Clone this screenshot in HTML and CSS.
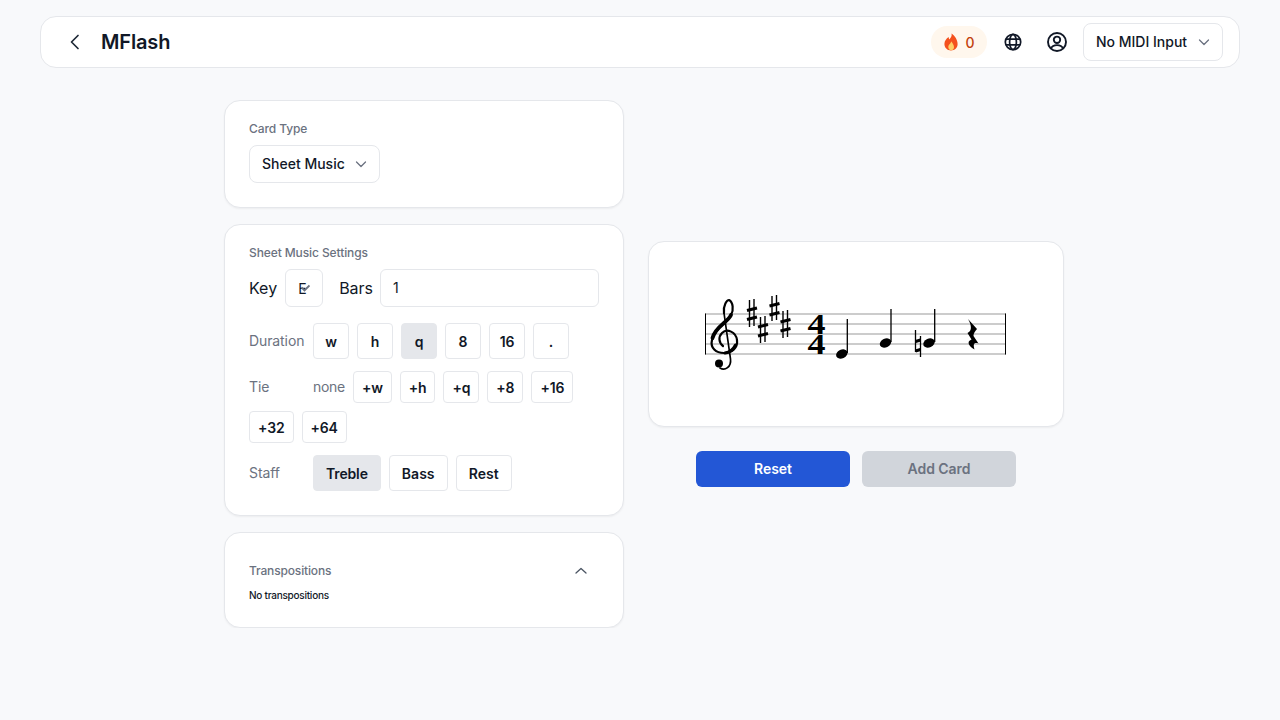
FILE: index.html
```html
<!DOCTYPE html>
<html lang="en">
<head>
  <meta charset="UTF-8" />
  <title>MFlash</title>
  <link rel="stylesheet" href="styles.css">
</head>
<body>

<!-- Top bar -->
<header class="topbar">
  <div class="topbar-left">
    <button class="icon-btn back-btn" aria-label="Back">
      <svg width="20" height="20" viewBox="0 0 20 20" fill="none" stroke="#1f2937" stroke-width="1.7" stroke-linecap="round" stroke-linejoin="round"><path d="M13 3.5 6.5 10l6.500 6.500"/></svg>
    </button>
    <h1 class="brand">MFlash</h1>
  </div>
  <div class="topbar-right">
    <div class="streak">
      <svg width="16" height="18" viewBox="0 0 16 18"><path fill="#f4511e" d="M8.600.6c.5 3-1 4.400-2.300 5.900-.4-.9-.6-1.500-.7-2.400C3.400 5.700 1.400 8 1.400 11c0 3.800 2.900 6.400 6.600 6.400s6.600-2.600 6.600-6.200C14.600 6.800 11.800 2.900 8.600.6z"/><path fill="#ffcf66" d="M8.200 8.300c.2 1.800-2.900 3.300-2.900 5.800 0 1.800 1.200 3.200 2.800 3.200s2.900-1.300 2.900-3.100c0-2.400-1.700-4.100-2.800-5.900z"/></svg>
      <span>0</span>
    </div>
    <button class="icon-btn globe-btn" aria-label="Language">
      <svg width="20" height="20" viewBox="0 0 20 20" fill="none" stroke="#111827" stroke-width="1.700"><circle cx="10" cy="10" r="7.700"/><ellipse cx="10" cy="10" rx="3.400" ry="7.700"/><path d="M2.900 7.200h14.200M2.900 12.800h14.200"/></svg>
    </button>
    <button class="icon-btn user-btn" aria-label="Account">
      <svg width="22" height="22" viewBox="0 0 22 22" fill="none" stroke="#111827" stroke-width="1.900"><circle cx="11" cy="11" r="9"/><circle cx="11" cy="8.800" r="3.200"/><path d="M5 17.500c1-2.500 3.200-3.400 6-3.400s5 .9 6 3.400"/></svg>
    </button>
    <div class="select midi-select">
      <span>No MIDI Input</span>
      <svg class="chev" width="14" height="14" viewBox="0 0 14 14" fill="none" stroke="#6b7280" stroke-width="1.300" stroke-linecap="round" stroke-linejoin="round"><path d="M2.500 5 7 9.500 11.500 5"/></svg>
    </div>
  </div>
</header>

<main class="layout">
  <section class="left-col">

    <div class="card">
      <div class="label">Card Type</div>
      <div class="select type-select">
        <span>Sheet Music</span>
        <svg class="chev" width="14" height="14" viewBox="0 0 14 14" fill="none" stroke="#6b7280" stroke-width="1.300" stroke-linecap="round" stroke-linejoin="round"><path d="M2.500 5 7 9.500 11.500 5"/></svg>
      </div>
    </div>

    <div class="card">
      <div class="label">Sheet Music Settings</div>
      <div class="key-row">
        <span class="field-name">Key</span>
        <div class="key-box">
          <span>E</span>
          <svg class="key-chev" width="9" height="9" viewBox="0 0 9 9" fill="none" stroke="#6b7280" stroke-width="1.900"><path d="M.5 3.500 3.500 6.500 8.500 1.500"/></svg>
        </div>
        <span class="field-name bars-name">Bars</span>
        <div class="bars-box">1</div>
      </div>

      <div class="btn-row">
        <span class="row-name">Duration</span>
        <button class="tool-btn square">w</button>
        <button class="tool-btn square">h</button>
        <button class="tool-btn square on">q</button>
        <button class="tool-btn square">8</button>
        <button class="tool-btn square">16</button>
        <button class="tool-btn square">.</button>
      </div>

      <div class="btn-row tie-row">
        <span class="row-name">Tie</span>
        <span class="tie-none">none</span>
        <button class="tool-btn tie">+w</button>
        <button class="tool-btn tie">+h</button>
        <button class="tool-btn tie">+q</button>
        <button class="tool-btn tie">+8</button>
        <button class="tool-btn tie">+16</button>
        <button class="tool-btn tie">+32</button>
        <button class="tool-btn tie">+64</button>
      </div>

      <div class="btn-row staff-row">
        <span class="row-name">Staff</span>
        <button class="tool-btn on">Treble</button>
        <button class="tool-btn">Bass</button>
        <button class="tool-btn">Rest</button>
      </div>
    </div>

    <div class="card">
      <div class="trans-head">
        <span class="label">Transpositions</span>
        <svg class="trans-chev" width="14" height="14" viewBox="0 0 14 14" fill="none" stroke="#4b5563" stroke-width="1.300" stroke-linecap="round" stroke-linejoin="round"><path d="M2 9 7 4.500 12 9"/></svg>
      </div>
      <div class="trans-empty">No transpositions</div>
    </div>

  </section>

  <section class="right-col">
    <div class="card preview">
      <!-- viewBox uses page coordinates, easier to line up -->
      <svg class="staff" width="340" height="110" viewBox="686 279 340 110">
        <g stroke="#999" stroke-width="1">
          <path d="M705 314H1006M705 324H1006M705 334H1006M705 344H1006M705 354H1006"/>
        </g>
        <path stroke="#000" stroke-width="1" d="M705.500 313.500V354.500M1005.500 313.500V354.500"/>

        <!-- clef -->
        <g fill="none" stroke="#000" stroke-linecap="round">
          <path stroke-width="2.200" d="M724 313C723 305 727 300 729 300C733 302 734 310 731 315C728 322 715 327 712 340C710 348 716 353 724 353C732 353 738 348 737 340C736 332 727 328 722 333C718 337 719 343 723 346"/>
          <path stroke-width="3.800" d="M731 315C728 322 715 327 712.500 338"/>
          <path stroke-width="3" d="M735.500 345C733 350 729 352.500 725 353"/>
          <path stroke-width="1.700" d="M724 313L730.500 359C731.500 367 725 371 720 368"/>
        </g>
        <circle cx="719" cy="363.500" r="4"/>

        <!-- key signature -->
        <g stroke="#000" fill="none">
          <g stroke-width="1.400"><path d="M749.500 300V327M754 299V326"/><path stroke-width="3" d="M747 310.500 757 308M747 319.500 757 317"/></g>
          <g stroke-width="1.400"><path d="M760.500 317V343M765 316V342"/><path stroke-width="3" d="M758 327 768 324.500M758 336 768 333.500"/></g>
          <g stroke-width="1.400"><path d="M772 296V321M776.500 295V320"/><path stroke-width="3" d="M769.500 306 779.500 303.500M769.500 315 779.500 312.500"/></g>
          <g stroke-width="1.400"><path d="M783 311V338M787.500 310V337"/><path stroke-width="3" d="M780.500 322 790.500 319.500M780.500 331 790.500 328.500"/></g>
        </g>

        <!-- time signature -->
        <text class="time-sig" transform="translate(816.500 333.500) scale(1.200 1)">4</text>
        <text class="time-sig" transform="translate(816.500 354) scale(1.200 1)">4</text>

        <!-- notes -->
        <g stroke="#000" stroke-width="1.300">
          <path d="M847.300 353V319M891 342V309M934.700 342V309"/>
        </g>
        <ellipse cx="841.800" cy="354" rx="6" ry="4.300" transform="rotate(-25 841.800 354)"/>
        <ellipse cx="885.500" cy="343" rx="6" ry="4.300" transform="rotate(-25 885.500 343)"/>
        <ellipse cx="929" cy="343" rx="6" ry="4.300" transform="rotate(-25 929 343)"/>

        <!-- natural -->
        <g stroke="#000" fill="none">
          <path stroke-width="1.300" d="M915.500 330V352M920.500 336V357"/>
          <path stroke-width="3" d="M915.500 341.500 920.500 340M915.500 351 920.500 349.500"/>
        </g>

        <!-- quarter rest -->
        <path d="M968 319 977 329C975 331.500 973.300 333.500 973.500 336L978.500 343.500C975 342.500 972.500 343 974.500 349.500C969 346.500 966 341.500 971.500 339.500L967.500 333C972 331 972 326 968 319z"/>
      </svg>
    </div>
    <div class="actions">
      <button class="action reset">Reset</button>
      <button class="action add">Add Card</button>
    </div>
  </section>
</main>

</body>
</html>
```

FILE: styles.css
```css
* {
    box-sizing: border-box;
}
body {
    margin: 0;
    background: #f8f9fb;
    color: #111827;
    font-family: Inter, "Liberation Sans", sans-serif;
}
button {
    font-family: inherit;
}

/* top bar */
.topbar {
    display: flex;
    justify-content: space-between;
    align-items: center;
    height: 52px;
    margin: 16px 40px 0;
    padding: 0 16px 0 24px;
    background: #fff;
    border: 1px solid #e5e7eb;
    border-radius: 16px;
}
.topbar-left,
.topbar-right {
    display: flex;
    align-items: center;
}
.icon-btn {
    display: flex;
    align-items: center;
    justify-content: center;
    padding: 0;
    background: none;
    border: none;
    cursor: pointer;
}
.back-btn {
    width: 20px;
    height: 20px;
}
.brand {
    margin: 0 0 0 16px;
    font-size: 20px;
    font-weight: 600;
    line-height: 28px;
    letter-spacing: -0.15px;
    color: #111827;
}
.streak {
    display: flex;
    align-items: center;
    justify-content: center;
    gap: 6px;
    width: 56px;
    height: 32px;
    background: #fff7ed;
    border-radius: 16px;
    font-size: 14px;
    font-weight: 500;
    color: #c2410c;
}
.globe-btn {
    width: 20px;
    height: 20px;
    margin-left: 16px;
}
.user-btn {
    width: 22px;
    height: 22px;
    margin-left: 23px;
}
.select {
    display: flex;
    align-items: center;
    justify-content: space-between;
    height: 38px;
    padding-bottom: 2px;
    background: #fff;
    border: 1px solid #e5e7eb;
    border-radius: 8px;
    font-size: 14px;
    font-weight: 500;
    color: #111827;
}
.select .chev {
    margin-top: 2px;
}
.midi-select {
    width: 140px;
    margin-left: 15px;
    padding-left: 12px;
    padding-right: 11px;
}
.type-select {
    width: 131px;
    padding-left: 12px;
    padding-right: 11px;
}

/* columns */
.layout {
    display: flex;
    align-items: center;
    gap: 24px;
    width: 840px;
    margin: 32px 0 0 224px;
}
.left-col {
    display: flex;
    flex-direction: column;
    gap: 16px;
    width: 400px;
}
.right-col {
    display: flex;
    flex-direction: column;
    align-items: center;
    gap: 24px;
    width: 416px;
}
.card {
    padding: 20px 24px 24px;
    background: #fff;
    border: 1px solid #e5e7eb;
    border-radius: 16px;
    box-shadow: 0 1px 2px rgba(0, 0, 0, 0.05);
}
.label {
    margin-bottom: 8px;
    font-size: 12px;
    font-weight: 500;
    line-height: 16px;
    letter-spacing: -0.1px;
    color: #6b7280;
}

/* key + bars */
.key-row {
    display: flex;
    align-items: center;
    height: 38px;
}
.field-name {
    font-size: 16px;
    color: #111827;
}
.key-box {
    position: relative;
    display: flex;
    align-items: center;
    width: 38px;
    height: 38px;
    margin-left: 8px;
    padding-left: 12px;
    background: #fff;
    border: 1px solid #e5e7eb;
    border-radius: 6px;
    font-size: 14px;
}
.key-chev {
    position: absolute;
    top: 14px;
    left: 15px;
}
.bars-name {
    margin-left: 16px;
}
.bars-box {
    flex: 1;
    display: flex;
    align-items: center;
    height: 38px;
    margin-left: 7px;
    padding-left: 12px;
    padding-bottom: 1px;
    border: 1px solid #e5e7eb;
    border-radius: 6px;
    font-size: 14px;
}

/* button rows */
.btn-row {
    display: flex;
    align-items: center;
    flex-wrap: wrap;
    gap: 8px;
    margin-top: 16px;
}
.row-name {
    width: 56px;
    padding-bottom: 1px;
    font-size: 14px;
    letter-spacing: -0.1px;
    color: #6b7280;
}
.tool-btn {
    height: 36px;
    padding: 0 12px;
    background: #fff;
    border: 1px solid #e5e7eb;
    border-radius: 4px;
    font-size: 14px;
    font-weight: 600;
    letter-spacing: -0.15px;
    color: #111827;
    cursor: pointer;
}
.tool-btn.square {
    width: 36px;
    padding: 0;
}
.tool-btn.tie {
    height: 32px;
    padding: 0 8px;
}
.tool-btn.on {
    background: #e5e7eb;
    border-color: #e5e7eb;
}
.tie-row {
    margin-top: 12px;
}
.staff-row {
    margin-top: 12px;
}
.staff-row .tool-btn:not(.on) {
    letter-spacing: 0.05px;
}
.tie-none {
    padding-bottom: 1px;
    letter-spacing: -0.3px;
    font-size: 14px;
    color: #6b7280;
}

/* transpositions */
.card:last-child .trans-head {
    margin-top: 4px;
}
.trans-head {
    display: flex;
    justify-content: space-between;
    align-items: center;
    height: 28px;
    padding-right: 11px;
}
.trans-head .label {
    margin: 0;
    letter-spacing: -0.15px;
}
.trans-empty {
    margin-top: 2px;
    font-size: 10px;
    font-weight: 500;
    line-height: 16px;
    letter-spacing: -0.25px;
    color: #111827;
}

/* preview */
.preview {
    display: flex;
    justify-content: center;
    align-items: center;
    width: 416px;
    height: 186px;
    padding: 0;
}
.staff {
    display: block;
}
.time-sig {
    font-family: "Liberation Serif", serif;
    font-size: 30px;
    font-weight: 700;
    text-anchor: middle;
}
.actions {
    display: flex;
    gap: 12px;
}
.action {
    width: 154px;
    height: 36px;
    padding-bottom: 2px;
    border: none;
    border-radius: 6px;
    font-size: 14px;
    font-weight: 600;
    letter-spacing: -0.05px;
    cursor: pointer;
}
.reset {
    background: #2357d6;
    color: #fff;
}
.add {
    background: #d1d5db;
    color: #6b7280;
}
```
